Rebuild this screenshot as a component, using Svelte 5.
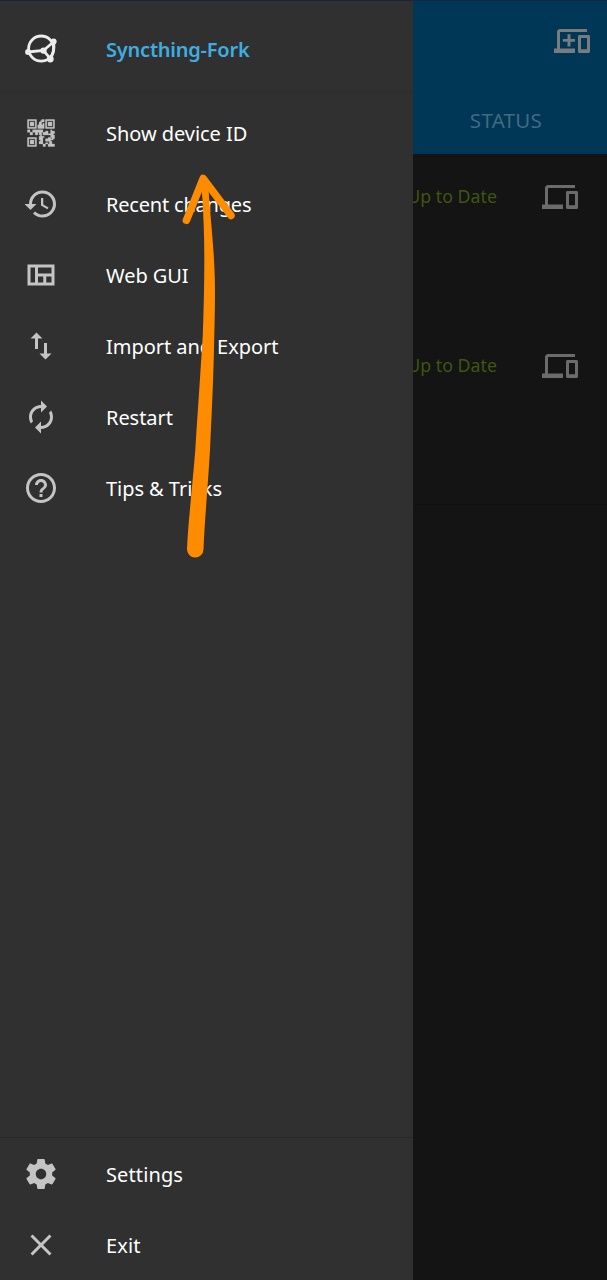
<script>
  const paths = {
    history: 'M13 3a9 9 0 0 0-9 9H1l3.89 3.89.07.14L9 12H6c0-3.87 3.13-7 7-7s7 3.13 7 7-3.13 7-7 7c-1.93 0-3.68-.79-4.94-2.06l-1.42 1.42A8.95 8.95 0 0 0 13 21a9 9 0 0 0 0-18zm-1 5v5l4.28 2.54.72-1.21-3.5-2.08V8H12z',
    quilt: 'M3 5h18v14H3zM5 7v10h3V7zM10 7v4h9V7zM10 13v4h3.5v-4zM15.5 13v4H19v-4z',
    swap: 'M9 3L5 6.99h3V14h2V6.99h3L9 3zm7 14.01V10h-2v7.01h-3L15 21l4-3.99h-3z',
    renew: 'M12 6v3l4-4-4-4v3c-4.42 0-8 3.58-8 8 0 1.57.46 3.03 1.24 4.26L6.7 14.8c-.45-.83-.7-1.79-.7-2.8 0-3.31 2.69-6 6-6zm6.76 1.74L17.3 9.2c.44.84.7 1.79.7 2.8 0 3.31-2.69 6-6 6v-3l-4 4 4 4v-3c4.42 0 8-3.58 8-8 0-1.57-.46-3.03-1.24-4.26z',
    help: 'M11 18h2v-2h-2v2zm1-16C6.48 2 2 6.48 2 12s4.48 10 10 10 10-4.48 10-10S17.52 2 12 2zm0 18c-4.41 0-8-3.59-8-8s3.59-8 8-8 8 3.59 8 8-3.59 8-8 8zm0-14c-2.21 0-4 1.79-4 4h2c0-1.1.9-2 2-2s2 .9 2 2c0 2-3 1.75-3 5h2c0-2.25 3-2.5 3-5 0-2.21-1.79-4-4-4z',
    gear: 'M19.43 12.98c.04-.32.07-.64.07-.98s-.03-.66-.07-.98l2.11-1.65c.19-.15.24-.42.12-.64l-2-3.46c-.12-.22-.39-.3-.61-.22l-2.49 1c-.52-.4-1.08-.73-1.69-.98l-.38-2.65A.49.49 0 0 0 14 2h-4c-.25 0-.46.18-.49.42l-.38 2.65c-.61.25-1.17.59-1.69.98l-2.49-1c-.23-.09-.49 0-.61.22l-2 3.46c-.13.22-.07.49.12.64l2.11 1.65c-.04.32-.07.65-.07.98s.03.66.07.98l-2.11 1.65c-.19.15-.24.42-.12.64l2 3.46c.12.22.39.3.61.22l2.49-1c.52.4 1.08.73 1.69.98l.38 2.65c.03.24.24.42.49.42h4c.25 0 .46-.18.49-.42l.38-2.65c.61-.25 1.17-.59 1.69-.98l2.49 1c.23.09.49 0 .61-.22l2-3.46c.12-.22.07-.49-.12-.64l-2.11-1.65zM12 15.5c-1.93 0-3.5-1.57-3.5-3.5s1.57-3.5 3.5-3.5 3.5 1.57 3.5 3.5-1.57 3.5-3.5 3.5z',
    close: 'M19 6.41L17.59 5 12 10.59 6.41 5 5 6.41 10.59 12 5 17.59 6.41 19 12 13.41 17.59 19 19 17.59 13.41 12z',
    devices: 'M4 6h18V4H4c-1.1 0-2 .9-2 2v11H0v3h14v-3H4V6zm19 2h-6c-.55 0-1 .45-1 1v10c0 .55.45 1 1 1h6c.55 0 1-.45 1-1V9c0-.55-.45-1-1-1zm-1 9.5h-4V10h4v7.500z',
    plus: 'M9 7.5h2v3.200H14v1.800h-3v3.200H9v-3.200H5.900v-1.800H9z'
  };

  const qrRows = [
    '#######....##.#######',
    '#.....#...###.#.....#',
    '#.###.#..##...#.###.#',
    '#.###.#..##.#.#.###.#',
    '#.###.#.#####.#.###.#',
    '#.....#.#####.#.....#',
    '#######.#####.#######',
    '.....................',
    '##..########......#..',
    '##..########..##..###',
    '..##..##.##.####..###',
    '..##..##.##.########.',
    '..........#.......###',
    '.........####.....###',
    '#######..###....##.##',
    '#.....#..###..######.',
    '#.###.#...##..####...',
    '#.###.#..###.....##..',
    '#.###.#..###..##.##..',
    '#.....#.....##..#####',
    '#######.....##..#####'
  ];
  const qr = qrRows
    .flatMap((row, y) => [...row].map((c, x) => (c === '#' ? `M${x} ${y}h1v1h-1z` : '')))
    .join('');

  const top = [
    { label: 'Show device ID', icon: 'qr' },
    { label: 'Recent changes', icon: 'history' },
    { label: 'Web GUI', icon: 'quilt' },
    { label: 'Import and Export', icon: 'swap' },
    { label: 'Restart', icon: 'renew' },
    { label: 'Tips & Tricks', icon: 'help' }
  ];
  const bottom = [
    { label: 'Settings', icon: 'gear' },
    { label: 'Exit', icon: 'close' }
  ];
</script>

{#snippet icon(name)}
  {#if name === 'qr'}
    <svg class="icon" viewBox="-3.5 -3.5 28 28" fill="currentColor" stroke="currentColor" stroke-width="0.22"><path d={qr} /></svg>
  {:else}
    <svg class="icon" viewBox="0 0 24 24" fill="currentColor" fill-rule="evenodd"><path d={paths[name]} /></svg>
  {/if}
{/snippet}

{#snippet row(item)}
  <li class="row">
    {@render icon(item.icon)}
    <span class:tight={item.label === 'Recent changes'} class:loose={item.icon === 'gear' || item.icon === 'close'}>{item.label}</span>
  </li>
{/snippet}

<div class="screen">
  <main>
    <header>
      <div class="actions">
        <svg class="icon" viewBox="0 0 24 24" fill="currentColor" fill-rule="evenodd">
          <path d={paths.devices} /><path d={paths.plus} />
        </svg>
      </div>
      <div class="tab">STATUS</div>
    </header>
    <section class="device first">
      <span>Up to Date</span>
      {@render icon('devices')}
    </section>
    <section class="device">
      <span>Up to Date</span>
      {@render icon('devices')}
    </section>
  </main>

  <nav>
    <div class="brand">
      <svg class="icon" viewBox="0 0 36 36" fill="none" stroke="currentColor" stroke-width="2.8">
        <circle cx="18.2" cy="17.6" r="12.6" />
        <path d="M5 21l15.500-1.500 10.500-9M20.500 19.600l6.800 8M30.800 10.600q.8 10-3.500 17" />
        <g fill="currentColor" stroke="none">
          <circle cx="5" cy="21" r="2.9" />
          <circle cx="20.5" cy="19.6" r="3.2" />
          <circle cx="30.6" cy="10.4" r="3" />
          <circle cx="27.3" cy="28" r="3.4" />
        </g>
      </svg>
      <span>Syncthing-Fork</span>
    </div>
    <ul class="upper">
      {#each top as item}{@render row(item)}{/each}
    </ul>
    <ul class="lower">
      {#each bottom as item}{@render row(item)}{/each}
    </ul>
  </nav>

  <svg class="arrow" viewBox="0 0 607 1280">
    <path
      d="M200 181C203 195 203 210 203.7 225C205 260 204 300 202.8 335C200 380 197.500 415 195.300 450C192 490 188 525 187 549A8.2 8.2 0 0 0 203.500 549.500C205 515 208 485 210 450C212 410 213.500 375 214.200 340C215 310 215.200 290 214.700 275C213.500 240 210 215 208.500 188Z"
    />
    <path class="head" d="M186.400 220.300L203.200 178.500L231 215.500" />
  </svg>
</div>

<style>
  :global(body) {
    background: #141414;
  }
  .screen {
    position: relative;
    width: 607px;
    height: 1280px;
    overflow: hidden;
    background: #141414;
    border-top: 1px solid #19223f;
    box-sizing: border-box;
    font-family: 'Noto Sans', sans-serif;
  }
  .icon {
    display: block;
    flex: none;
    width: 36px;
    height: 36px;
  }
  header {
    box-sizing: border-box;
    height: 153px;
    display: flex;
    flex-direction: column;
    background: #003757;
  }
  .actions {
    display: flex;
    justify-content: flex-end;
    padding: 22px 17.5px 0 0;
    color: #787c7e;
  }
  .tab {
    align-self: flex-end;
    width: 202px;
    margin-top: 47px;
    text-align: center;
    font-size: 20.5px;
    line-height: 28px;
    letter-spacing: 0.3px;
    color: #426a80;
  }
  .device {
    display: flex;
    justify-content: flex-end;
    box-sizing: border-box;
    height: 182px;
    padding: 25px 29px 0 0;
    gap: 45px;
    font-size: 17.8px;
    line-height: 35px;
    color: #3e5611;
    border-bottom: 1px solid #101010;
  }
  .device.first {
    height: 169px;
    border: 0;
  }
  .device .icon {
    color: #6b6b6b;
  }
  nav {
    position: absolute;
    inset: 0 auto 0 0;
    width: 413px;
    display: flex;
    flex-direction: column;
    background: #303030;
    color: #c4c4c4;
  }
  .brand {
    display: flex;
    align-items: center;
    gap: 47px;
    height: 92px;
    box-sizing: border-box;
    padding: 4px 0 0 23px;
    border-bottom: 1px solid #2d2d2d;
    font-size: 20px;
    font-weight: 600;
    letter-spacing: -0.22px;
    color: #3fade0;
  }
  .brand span {
    padding-top: 1px;
  }
  .brand .icon {
    color: #ececec;
  }
  ul {
    list-style: none;
    margin: 0;
    padding: 0;
  }
  .upper {
    flex: 1;
    padding-top: 4px;
  }
  .lower {
    height: 142px;
    border-top: 1px solid #282828;
  }
  .row {
    display: flex;
    align-items: center;
    gap: 47px;
    height: 71px;
    padding-left: 23px;
    font-size: 20px;
    white-space: nowrap;
  }
  .row span {
    padding-top: 2px;
    letter-spacing: -0.05px;
    color: #fff;
  }
  .row .tight {
    letter-spacing: -0.2px;
  }
  .row .loose {
    letter-spacing: 0.12px;
  }
  .arrow {
    position: absolute;
    left: 0;
    top: -1px;
    width: 607px;
    height: 1280px;
    fill: #ff8c00;
    pointer-events: none;
  }
  .head {
    fill: none;
    stroke: #ff8c00;
    stroke-width: 7.5;
    stroke-linecap: round;
    stroke-linejoin: round;
  }
</style>
